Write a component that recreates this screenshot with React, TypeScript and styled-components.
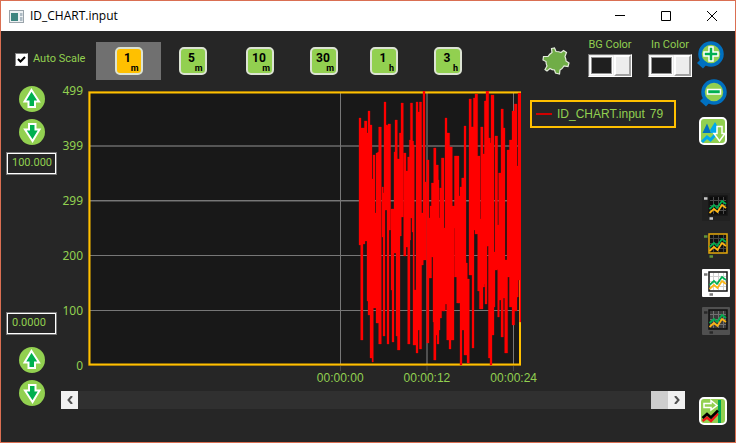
import React, { useState } from "react";
import styled, { createGlobalStyle } from "styled-components";

const GlobalStyle = createGlobalStyle`
  * { box-sizing: border-box; }
  body { margin: 0; background: #262626; }
  button, input { font: inherit; color: inherit; margin: 0; padding: 0; border: 0; border-radius: 0; }
  button { background: none; cursor: pointer; }
  svg { display: block; }
`;

const UI = `Roboto, "Noto Sans", sans-serif`;
const WIDE = `"Noto Sans", "Open Sans", sans-serif`;
const GREEN = "#92d050";
const AMBER = "#ffc000";

const Window = styled.div`
  display: flex;
  flex-direction: column;
  min-height: 100vh;
  border: 1px solid #da6f52;
  background: #262626;
  color: ${GREEN};
  font: 11px/14px ${UI};
`;

const TitleBar = styled.header`
  display: flex;
  align-items: center;
  height: 30px;
  padding-left: 8px;
  background: #fff;
  color: #000;
`;

const Title = styled.h1`
  flex: 1;
  margin: 0 0 0 6px;
  font: 400 12px/18px "Open Sans", ${WIDE};
`;

const CaptionButton = styled.button`
  display: grid;
  place-items: center;
  width: 46px;
  height: 28px;
`;

const Body = styled.div`
  display: flex;
  flex: 1;
`;

const Content = styled.main`
  display: flex;
  flex: 1;
  min-width: 0;
  flex-direction: column;
`;

const Toolbar = styled.div`
  display: flex;
  height: 55px;
  padding: 0 3px 0 14px;
`;

const CheckLabel = styled.label`
  display: flex;
  align-items: center;
  gap: 5px;
  width: 81px;
  height: 56px;
  white-space: nowrap;
`;

const CheckBox = styled.span`
  display: grid;
  width: 13px;
  height: 13px;
  > * { grid-area: 1 / 1; }
  > svg { pointer-events: none; }
`;

const CheckInput = styled.input`
  appearance: none;
  width: 13px;
  height: 13px;
  background: #fff;
  border: 1px solid #808080;
  border-right-color: #e3e3e3;
  border-bottom-color: #e3e3e3;
  & + svg { visibility: hidden; }
  &:checked + svg { visibility: visible; }
`;

const Ranges = styled.div`
  display: grid;
  grid-template-columns: 65px 63px 72px 56px 64px 64px;
  height: 38px;
  margin-top: 11px;
`;

const RangeButton = styled.button<{ $active: boolean }>`
  display: grid;
  place-items: center;
  background: ${(p) => (p.$active ? "#707070" : "transparent")};
`;

const RangeTile = styled.span<{ $active: boolean }>`
  display: flex;
  flex-direction: column;
  width: 28px;
  height: 28px;
  padding: 3px 2px 0 0;
  border: 2px solid #dce3d3;
  border-radius: 5px;
  background: ${(p) => (p.$active ? AMBER : GREEN)};
  color: #000;
  font-weight: 700;
`;

const RangeNumber = styled.span`
  align-self: center;
  font-size: 12px;
  line-height: 13px;
`;

const RangeUnit = styled.span`
  align-self: flex-end;
  font-size: 9px;
  line-height: 7px;
`;

const ToolbarEnd = styled.div`
  display: flex;
  align-items: flex-start;
  margin-left: auto;
`;

const IconButton = styled.button`
  display: block;
  width: 28px;
  height: 28px;
  flex: none;
`;

const GearButton = styled(IconButton)`
  margin: 16px 18px 0 0;
`;

const ColorField = styled.div`
  display: flex;
  flex-direction: column;
  align-items: center;
  gap: 2px;
  width: 44px;
  margin-top: 7px;
  white-space: nowrap;
  & + & { margin-left: 16px; }
`;

const ColorButton = styled.button`
  display: grid;
  grid-template-columns: 25px 1fr;
  width: 44px;
  height: 23px;
  border: 1px solid #fff;
  border-top-color: #777;
  border-left-color: #777;
  background: #ececec;
`;

const Swatch = styled.span`
  margin: 2px;
  border: 1px solid #909090;
  background: #1f1f1f;
  outline: 1px solid #fff;
`;

const Knob = styled.span`
  border: 2px solid #fff;
  border-right-color: #a0a0a0;
  border-bottom-color: #a0a0a0;
  background: #ededed;
`;

const Workspace = styled.div`
  display: flex;
  flex: 1;
`;

const ScaleColumn = styled.div`
  display: flex;
  flex-direction: column;
  width: 60px;
  padding-left: 5px;
`;

const ArrowPair = styled.div`
  display: grid;
  gap: 7px;
  margin-left: 13px;
`;

const ArrowButton = styled.button`
  width: 26px;
  height: 26px;
`;

const ValueInput = styled.input`
  width: 51px;
  height: 23px;
  margin: 7px 0 137px;
  padding: 0 2px 2px 4px;
  border: 2px solid #fff;
  outline: 1px solid #777;
  outline-offset: -1px;
  background: #262626;
  & ~ & { margin: 0 0 12px; }
`;

const ChartColumn = styled.div`
  display: flex;
  flex: 1;
  flex-direction: column;
  min-width: 0;
`;

const ChartGrid = styled.div`
  display: grid;
  grid-template-columns: 27px minmax(200px, 1fr) 174px;
  padding-top: 5px;
`;

const ValueAxis = styled.div`
  display: flex;
  flex-direction: column;
  justify-content: space-between;
  height: 291px;
  margin: -8px 0 -9px;
  padding-right: 5px;
  text-align: right;
  font: 12px/16px ${WIDE};
`;

const Plot = styled.svg`
  width: 100%;
  height: 280px;
`;

const Legend = styled.div`
  display: flex;
  align-items: center;
  gap: 5px;
  width: 146px;
  height: 28px;
  margin: 9px 0 0 9px;
  padding-left: 4px;
  border: 2px solid ${AMBER};
  font: 12px/16px "Liberation Sans", Arial, sans-serif;
  white-space: nowrap;
`;

const TimeAxis = styled.div`
  grid-column: 2 / 4;
  display: flex;
  justify-content: flex-end;
  gap: 40px;
  padding: 0 158px 0 0;
  font: 12px/14px "Liberation Sans", Arial, sans-serif;
`;

const ScrollBar = styled.div`
  display: flex;
  height: 18px;
  margin: 6px 10px 0 0;
  background: #303030;
`;

const ScrollButton = styled.button`
  display: grid;
  place-items: center;
  width: 17px;
  background: #f0f0f0;
`;

const ScrollThumb = styled.span`
  width: 17px;
  margin-left: auto;
  background: #cdcdcd;
`;

const Rail = styled.aside`
  display: flex;
  flex-direction: column;
  gap: 10px;
  width: 40px;
  padding: 10px 0 17px 4px;
`;

const Themes = styled.div`
  display: grid;
  gap: 10px;
  margin: 38px 0 auto 3px;
`;

/* Strokes of the trace: x start and x end in thirds of a pixel, then top and bottom in pixels. */
const TRACE_ORIGIN = 262;
const TRACE: number[][] = [
  [27, 33, 118, 245], [32, 39, 128, 340], [38, 45, 128, 244], [43, 51, 121, 241], [51, 56, 133, 301],
  [54, 60, 111, 315], [60, 66, 125, 358], [66, 70, 179, 362], [69, 75, 155, 308], [74, 79, 213, 308],
  [78, 84, 153, 323], [83, 88, 152, 323], [86, 94, 127, 344], [96, 100, 187, 237], [99, 105, 193, 336],
  [102, 108, 102, 210], [107, 113, 125, 210], [111, 117, 126, 344], [114, 122, 124, 230],
  [123, 128, 209, 290], [126, 132, 209, 342], [132, 137, 152, 253], [135, 142, 120, 253],
  [138, 144, 159, 336], [142, 150, 159, 350], [148, 154, 133, 236], [153, 160, 103, 217],
  [161, 168, 153, 256], [168, 174, 171, 247], [173, 180, 157, 344], [178, 182, 140, 240],
  [181, 188, 103, 218], [186, 191, 141, 232], [189, 193, 145, 345], [191, 199, 290, 345],
  [198, 204, 102, 353], [203, 208, 112, 330], [208, 215, 102, 349], [214, 220, 213, 265],
  [219, 225, 91, 260], [225, 229, 182, 260], [230, 237, 160, 343], [237, 241, 218, 278],
  [240, 245, 206, 278], [244, 251, 183, 257], [249, 254, 200, 322], [251, 258, 148, 360],
  [257, 265, 165, 335], [261, 267, 180, 344], [265, 270, 218, 330], [269, 275, 188, 318],
  [274, 282, 158, 311], [280, 286, 228, 311], [285, 291, 118, 304], [290, 299, 133, 340],
  [297, 303, 148, 349], [299, 307, 147, 340], [306, 312, 206, 340], [312, 316, 206, 228],
  [313, 321, 156, 277], [320, 327, 156, 303], [325, 331, 196, 303], [330, 336, 187, 365],
  [335, 344, 178, 330], [342, 348, 126, 355], [347, 352, 263, 355], [351, 358, 279, 363],
  [357, 364, 99, 275], [362, 368, 127, 275], [366, 372, 127, 348], [370, 376, 98, 230],
  [375, 383, 94, 234], [383, 390, 156, 291], [388, 394, 219, 309], [392, 399, 127, 309],
  [398, 404, 154, 287], [403, 408, 101, 284], [405, 411, 101, 304], [408, 416, 91, 246],
  [410, 416, 91, 246], [415, 421, 138, 358], [420, 426, 143, 365], [423, 432, 95, 335],
  [430, 435, 252, 307], [435, 443, 136, 270], [443, 448, 225, 317], [446, 455, 173, 300],
  [453, 460, 109, 337], [459, 465, 128, 298], [464, 473, 260, 353], [471, 479, 150, 277],
  [478, 486, 140, 307], [486, 494, 111, 325], [493, 501, 104, 311], [500, 505, 166, 297],
  [504, 510, 93, 280], [509, 513, 93, 322],
];
const tracePath = TRACE.map(([a, b, top, bottom]) => {
  const x = TRACE_ORIGIN + a / 3;
  return `M${x.toFixed(2)} ${top - 91}h${((b - a) / 3).toFixed(2)}V${bottom - 91}h${(-(b - a) / 3).toFixed(2)}z`;
}).join("");

function TracePlot() {
  return (
    <Plot viewBox="0 0 433 280" preserveAspectRatio="none" role="img" aria-label="ID_CHART.input trace">
      <rect width="433" height="275" fill="#5c4612" />
      <rect x="2" y="2" width="430" height="271" fill="#181818" />
      <g fill="#777">
        <rect x="2" y="54" width="430" height="1" fill="#555" />
        <rect x="2" y="55" width="430" height="1" fill="#555" />
        <rect x="2" y="109" width="430" height="1" />
        <rect x="2" y="110" width="430" height="1" fill="#444" />
        <rect x="2" y="164" width="430" height="1" />
        <rect x="2" y="219" width="430" height="1" />
        <rect x="252" y="2" width="1" height="271" />
        <rect x="338" y="2" width="2" height="271" fill="#505050" />
        <rect x="425" y="2" width="1" height="271" />
      </g>
      <path d="M1.500 1.500H432V273.500H1.500z" fill="none" stroke={AMBER} strokeWidth="2" />
      <path d="M252.500 275v5M339 275v5M425.500 275v5" stroke="#484848" />
      <path d={tracePath} fill="#ff0000" stroke="#ff0000" strokeOpacity="0.5" strokeWidth="0.600" />
    </Plot>
  );
}

function RoundArrow({ down = false }: { down?: boolean }) {
  return (
    <svg width="26" height="26" viewBox="0 0 26 26">
      <circle cx="13" cy="13" r="13" fill={GREEN} />
      <path
        d="M12.500 4L20 15.500H16V21H9.500V15.500H5.500z"
        transform={down ? "rotate(180 13 13)" : undefined}
        fill="#00b050"
        stroke="#fff"
        strokeWidth="2"
      />
    </svg>
  );
}

function Magnifier({ plus = false }: { plus?: boolean }) {
  return (
    <svg width="28" height="28" viewBox={plus ? "3 0 28 28" : "0 0 28 28"} overflow="visible">
      <path d="M1 22L7 16L13 21L7 27.500z" fill="#0070c0" />
      <circle cx="15" cy="13" r="11" fill={GREEN} stroke="#0070c0" strokeWidth="3.500" />
      {plus ? (
        <path d="M13 6h4v5h5v4h-5v5h-4v-5H8v-4h5z" fill="#00b050" stroke="#fff" strokeWidth="1.500" />
      ) : (
        <path d="M8.500 10.500h13v4.500h-13z" fill="#00b050" stroke="#fff" strokeWidth="1.500" />
      )}
    </svg>
  );
}

function Gear() {
  return (
    <svg width="28" height="28" viewBox="0 0 28 28">
      <path
        d="M9.500 1.500L12.500 1L14 4.500Q17 4.500 19 5.500L21.500 3.500L24.500 5.500L23 9.500Q24 12 24 14L27 16L26 19.500L22 19Q20.500 21.500 18 23L17.500 27L13.500 26L12.500 23Q10 23 8 21.500L5 24L3 22.500L5 19Q4 17 4 14.500L1 13L1.500 9.500L6 9.500Q7.500 7 10 5.500z"
        fill="#70ad47"
        stroke="#e4ecdc"
        strokeWidth="1.200"
      />
    </svg>
  );
}

function FitIcon() {
  return (
    <svg width="28" height="28" viewBox="0 0 28 28">
      <rect x="1" y="1" width="26" height="26" rx="4" fill={GREEN} stroke="#fff" strokeWidth="2" />
      <path d="M3.500 16L8 6.500L12 16z" fill="#0070c0" />
      <path d="M11 13L16 5L19 10V16H12z" fill="#00a8ec" />
      <path d="M3 25L8 20L11.500 23L16 18" fill="none" stroke="#00a8ec" strokeWidth="3" />
      <path d="M18 9.500h5v7h3L20.500 24L15 16.500h3z" fill={GREEN} stroke="#fff" strokeWidth="1.500" />
    </svg>
  );
}

type ThemeSpec = { name: string; back: string; fill: string; frame: string; grid: string; mark: string };

function ThemeIcon({ t }: { t: ThemeSpec }) {
  return (
    <svg width="28" height="28" viewBox="0 0 28 28">
      <rect width="28" height="28" rx="1" fill={t.back} />
      <rect x="7" y="3" width="18" height="19" fill={t.fill} stroke={t.frame} strokeWidth="1.500" />
      <path d="M11.500 4v17M16.500 4v17M21.500 4v17M8 7.500h16M8 12.500h16M8 17.500h16" stroke={t.grid} />
      <path d="M7.500 16L12 12L15 15L20 8L24 11" fill="none" stroke="#00b050" strokeWidth="1.700" />
      <path d="M7.500 20L12 16L15.500 19L20 12L24 15" fill="none" stroke="#fcb614" strokeWidth="1.700" />
      <path d="M2 5.500h3.500M7.500 25.500h3.500" stroke={t.mark} strokeWidth="2.500" />
    </svg>
  );
}

function LatestIcon() {
  return (
    <svg width="28" height="28" viewBox="0 0 28 28">
      <rect x="1" y="1" width="26" height="26" rx="4" fill={GREEN} stroke="#fff" strokeWidth="2" />
      <path d="M20.500 3v23" stroke="#00a651" strokeWidth="3" />
      <path d="M5 6.500h7V3.500L18 8.500L12 13V10.500H5z" fill={GREEN} stroke="#fff" strokeWidth="1.500" />
      <path d="M3.500 24L8 20.500L12 24L19 16.500" fill="none" stroke="#f01818" strokeWidth="2.500" />
      <path d="M3.500 21L8 17L12 20.500L19 13.500" fill="none" stroke="#000" strokeWidth="2.500" />
    </svg>
  );
}

const RANGES = [["1", "m"], ["5", "m"], ["10", "m"], ["30", "m"], ["1", "h"], ["3", "h"]];

const THEMES: ThemeSpec[] = [
  { name: "Dark", back: "#212121", fill: "#0c0c0c", frame: "#161616", grid: "#4c4c4c", mark: "#c8c8c8" },
  { name: "Amber", back: "#262626", fill: "#101010", frame: "#e5a80b", grid: "#444", mark: "#61943a" },
  { name: "Light", back: "#ffffff", fill: "#ffffff", frame: "#101010", grid: "#d0d0d0", mark: "#777" },
  { name: "Gray", back: "#505050", fill: "#3a3a3a", frame: "#101010", grid: "#707070", mark: "#282828" },
];

export default function App() {
  const [range, setRange] = useState(0);
  return (
    <>
      <GlobalStyle />
      <Window>
        <TitleBar>
          <svg width="15" height="13" viewBox="0 0 15 13">
            <rect x="0.500" y="0.500" width="14" height="12" fill="#eef1f3" stroke="#9aa4ab" />
            <rect x="2" y="3" width="7" height="8" fill="#3f8580" />
            <path d="M11 3h2.500v3H11zM11 7h2.500v4H11z" fill="#aebbc4" />
          </svg>
          <Title>ID_CHART.input</Title>
          <CaptionButton aria-label="Minimize">
            <svg width="10" height="10" viewBox="0 0 10 10"><path d="M0 4.500h10" stroke="#000" /></svg>
          </CaptionButton>
          <CaptionButton aria-label="Maximize">
            <svg width="10" height="10" viewBox="0 0 10 10"><path d="M.5.5h9v9h-9z" fill="none" stroke="#000" /></svg>
          </CaptionButton>
          <CaptionButton aria-label="Close">
            <svg width="10" height="10" viewBox="0 0 10 10"><path d="M0 0L10 10M10 0L0 10" stroke="#000" /></svg>
          </CaptionButton>
        </TitleBar>
        <Body>
          <Content>
            <Toolbar>
              <CheckLabel>
                <CheckBox>
                  <CheckInput type="checkbox" defaultChecked />
                  <svg width="13" height="13" viewBox="0 0 13 13">
                    <path d="M3 6L5.500 8.500L10 4" fill="none" stroke="#000" strokeWidth="2" />
                  </svg>
                </CheckBox>
                Auto Scale
              </CheckLabel>
              <Ranges>
                {RANGES.map(([n, unit], i) => (
                  <RangeButton key={n + unit} $active={range === i} aria-pressed={range === i} onClick={() => setRange(i)}>
                    <RangeTile $active={range === i}>
                      <RangeNumber>{n}</RangeNumber>
                      <RangeUnit>{unit}</RangeUnit>
                    </RangeTile>
                  </RangeButton>
                ))}
              </Ranges>
              <ToolbarEnd>
                <GearButton aria-label="Settings"><Gear /></GearButton>
                {["BG Color", "In Color"].map((name) => (
                  <ColorField key={name}>
                    <span id={name.replace(" ", "-")}>{name}</span>
                    <ColorButton aria-labelledby={name.replace(" ", "-")}><Swatch /><Knob /></ColorButton>
                  </ColorField>
                ))}
              </ToolbarEnd>
            </Toolbar>
            <Workspace>
              <ScaleColumn>
                <ArrowPair>
                  <ArrowButton aria-label="Raise maximum"><RoundArrow /></ArrowButton>
                  <ArrowButton aria-label="Lower maximum"><RoundArrow down /></ArrowButton>
                </ArrowPair>
                <ValueInput aria-label="Maximum" defaultValue="100.000" />
                <ValueInput aria-label="Minimum" defaultValue="0.0000" />
                <ArrowPair>
                  <ArrowButton aria-label="Raise minimum"><RoundArrow /></ArrowButton>
                  <ArrowButton aria-label="Lower minimum"><RoundArrow down /></ArrowButton>
                </ArrowPair>
              </ScaleColumn>
              <ChartColumn>
                <ChartGrid>
                  <ValueAxis>
                    {["499", "399", "299", "200", "100", "0"].map((v) => <span key={v}>{v}</span>)}
                  </ValueAxis>
                  <TracePlot />
                  <Legend>
                    <svg width="16" height="2"><rect width="16" height="2" fill="#d00000" /></svg>
                    <span>ID_CHART.input</span>
                    <span>79</span>
                  </Legend>
                  <TimeAxis>
                    {["00:00:00", "00:00:12", "00:00:24"].map((t) => <span key={t}>{t}</span>)}
                  </TimeAxis>
                </ChartGrid>
                <ScrollBar>
                  <ScrollButton aria-label="Scroll left">
                    <svg width="8" height="8" viewBox="0 0 8 8"><path d="M6 0L2.500 4L6 8" fill="none" stroke="#505050" strokeWidth="2" /></svg>
                  </ScrollButton>
                  <ScrollThumb />
                  <ScrollButton aria-label="Scroll right">
                    <svg width="8" height="8" viewBox="0 0 8 8"><path d="M2 0L5.500 4L2 8" fill="none" stroke="#505050" strokeWidth="2" /></svg>
                  </ScrollButton>
                </ScrollBar>
              </ChartColumn>
            </Workspace>
          </Content>
          <Rail>
            <IconButton aria-label="Zoom in"><Magnifier plus /></IconButton>
            <IconButton aria-label="Zoom out"><Magnifier /></IconButton>
            <IconButton aria-label="Fit trace"><FitIcon /></IconButton>
            <Themes>
              {THEMES.map((t) => (
                <IconButton key={t.name} aria-label={`${t.name} theme`}><ThemeIcon t={t} /></IconButton>
              ))}
            </Themes>
            <IconButton aria-label="Go to latest"><LatestIcon /></IconButton>
          </Rail>
        </Body>
      </Window>
    </>
  );
}
